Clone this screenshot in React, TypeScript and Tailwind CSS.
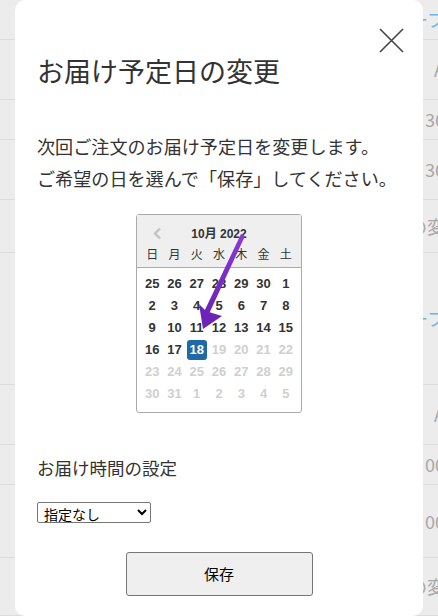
import { useState } from 'react';

const jp = { fontFamily: '"Noto Sans CJK JP", "Noto Sans", sans-serif' };
const num = { fontFamily: '"Liberation Sans", Arial, sans-serif' };

const weekdays = ['日', '月', '火', '水', '木', '金', '土'];

type Day = { n: number; muted?: boolean; selected?: boolean };

const weeks: Day[][] = [
  [{ n: 25 }, { n: 26 }, { n: 27 }, { n: 28 }, { n: 29 }, { n: 30 }, { n: 1 }],
  [{ n: 2 }, { n: 3 }, { n: 4 }, { n: 5 }, { n: 6 }, { n: 7 }, { n: 8 }],
  [{ n: 9 }, { n: 10 }, { n: 11 }, { n: 12 }, { n: 13 }, { n: 14 }, { n: 15 }],
  [
    { n: 16 },
    { n: 17 },
    { n: 18, selected: true },
    { n: 19, muted: true },
    { n: 20, muted: true },
    { n: 21, muted: true },
    { n: 22, muted: true },
  ],
  [23, 24, 25, 26, 27, 28, 29].map((n) => ({ n, muted: true })),
  [30, 31, 1, 2, 3, 4, 5].map((n) => ({ n, muted: true })),
];

// page behind the dialog, only its right edge shows
const bgRows = [
  { h: 40, text: 'ーフ', blue: true },
  { h: 60, text: 'A' },
  { h: 40, text: '36' },
  { h: 60, text: '36' },
  { h: 53, text: 'の変' },
  { h: 132, text: 'ーフ', blue: true },
  { h: 60, text: 'A' },
  { h: 40, text: '00' },
  { h: 73, text: '00' },
  { h: 58, text: 'の変' },
];

function Calendar() {
  return (
    <div className="relative mx-auto w-[166px] rounded-[3px] border border-[#aaaaaa] bg-white">
      <div className="border-b border-[#aaaaaa] bg-[#efefef] pb-[4px] pt-[10px]">
        <div className="relative flex h-[16px] items-center justify-center">
          <svg className="absolute left-[16px] top-[2px]" width="9" height="13" viewBox="0 0 9 13">
            <path d="M7 1.5 L2 6.5 L7 11.5" fill="none" stroke="#c4c4c4" strokeWidth="2.4" />
          </svg>
          <span className="text-[12px] font-bold text-[#333]" style={num}>
            10<span style={jp}>月</span> 2022
          </span>
        </div>
        <div className="mx-auto mt-[4px] grid w-[156px] grid-cols-7 text-center text-[12px] leading-[18px] text-[#333]" style={jp}>
          {weekdays.map((w) => (
            <span key={w}>{w}</span>
          ))}
        </div>
      </div>
      <div className="mx-auto grid w-[156px] grid-cols-7 pb-[7px] pt-[5px] text-center text-[13px] font-bold" style={num}>
        {weeks.flat().map((d, i) => (
          <div key={i} className="flex h-[22px] items-center justify-center">
            {d.selected ? (
              <span className="flex h-[20px] w-[20px] items-center justify-center rounded-[3px] bg-[#1e6aa8] text-white">
                {d.n}
              </span>
            ) : (
              <span className={d.muted ? 'text-[#cfcfcf]' : 'text-[#333]'}>{d.n}</span>
            )}
          </div>
        ))}
      </div>
    </div>
  );
}

export default function App() {
  const [time, setTime] = useState('none');

  return (
    <div className="relative h-[616px] w-[438px] overflow-hidden bg-[#ececec]">
      <div className="flex flex-col items-end text-[18px] text-[#a8a8a8]" style={jp}>
        {bgRows.map((r, i) => (
          <div key={i} className="flex w-full items-center justify-end border-b border-[#dddddd]" style={{ height: r.h }}>
            <span className={`mr-[-7px] ${r.blue ? 'text-[#6bb6e4]' : ''}`}>{r.text}</span>
          </div>
        ))}
      </div>

      <div className="absolute left-[15px] top-0 h-[616px] w-[408px] rounded-[10px] bg-white text-[#333]" style={jp}>
        <button className="absolute right-[19px] top-[28px]" aria-label="close">
          <svg width="25" height="25" viewBox="0 0 25 25">
            <path d="M1 1 L24 24 M24 1 L1 24" stroke="#444" strokeWidth="1.6" />
          </svg>
        </button>

        <div className="px-[22px] pt-[53px]">
          <h2 className="text-[27px] leading-[36px]">お届け予定日の変更</h2>

          <div className="mt-[41px] whitespace-nowrap text-[18.1px] leading-[32px]">
            <p>次回ご注文のお届け予定日を変更します。</p>
            <p>ご希望の日を選んで「保存」してください。</p>
          </div>

          <div className="mt-[20px]">
            <Calendar />
          </div>

          <p className="mt-[42px] text-[17.5px] leading-[26px]">お届け時間の設定</p>

          <select
            value={time}
            onChange={(e) => setTime(e.target.value)}
            className="mt-[21px] h-[21px] w-[114px] rounded-[2px] border border-[#767676] bg-white py-0 pl-[2px] text-[14px] leading-[17px] text-black"
            style={jp}
          >
            <option value="none">指定なし</option>
            <option value="am">午前中</option>
            <option value="pm">14時〜16時</option>
          </select>

          <div className="mt-[27px] flex justify-center">
            <button className="h-[44px] w-[187px] rounded-[3px] border border-[#767676] bg-[#efefef] text-[15px] text-black">
              保存
            </button>
          </div>
        </div>
      </div>

      {/* annotation arrow drawn over the calendar */}
      <svg className="absolute left-0 top-0" width="438" height="616" viewBox="0 0 438 616">
        <defs>
          <linearGradient id="ar" x1="0" y1="0" x2="0" y2="1">
            <stop offset="0" stopColor="#8a3ad6" />
            <stop offset="1" stopColor="#6a22b6" />
          </linearGradient>
        </defs>
        <path d="M241 234 L245 236 L208 316 L203 314 Z" fill="url(#ar)" />
        <path d="M203 329 L199 304 L206 311 L212 313 L222 316 Z" fill="#6c24b8" />
      </svg>
    </div>
  );
}
